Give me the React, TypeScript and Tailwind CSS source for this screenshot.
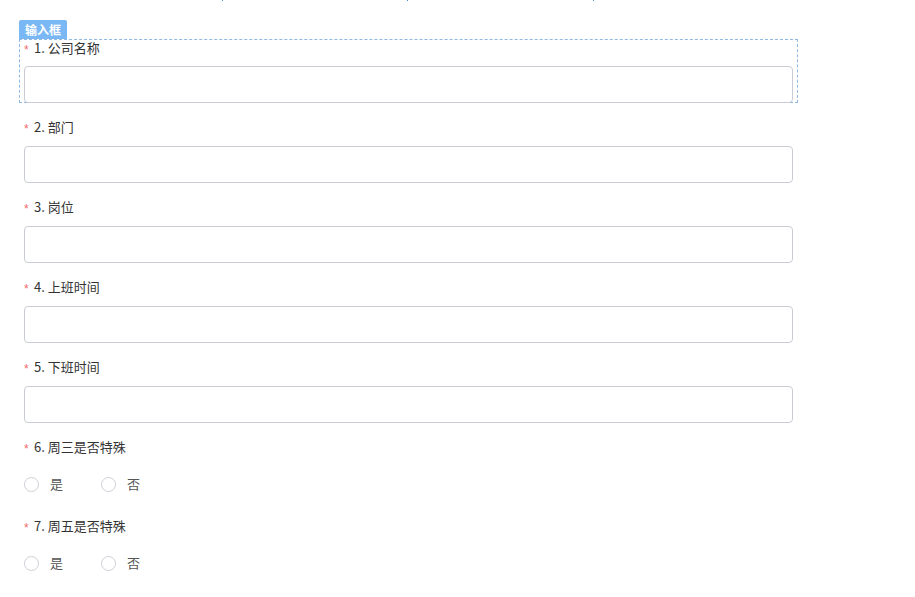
const font = { fontFamily: '"Noto Sans CJK SC", "Liberation Sans", sans-serif' };

const inputs = ["1. 公司名称", "2. 部门", "3. 岗位", "4. 上班时间", "5. 下班时间"];
const radios = ["6. 周三是否特殊", "7. 周五是否特殊"];

const Label = ({ text }: { text: string }) => (
  <div className="flex items-center h-[16px] text-[13px] leading-[16px] text-[#333]">
    <span className="w-[10px] text-[12px] leading-[12px] text-[#f56c6c] relative top-[2px]" style={{ fontFamily: '"Liberation Sans", sans-serif' }}>*</span>
    <span>{text}</span>
  </div>
);

const Radio = ({ text }: { text: string }) => (
  <label className="flex items-center gap-[11px] w-[77px] text-[13px] text-[#555]">
    <span className="w-[15px] h-[15px] rounded-full border border-[#cdd0d6] bg-white" />
    <span>{text}</span>
  </label>
);

export default function App() {
  return (
    <div className="w-[915px] h-[597px] bg-white overflow-hidden" style={font}>
      <div className="relative h-[20px]">
        <span className="absolute left-[222px] top-0 w-[1px] h-[1px] bg-[#3a8ee6]" />
        <span className="absolute left-[407px] top-0 w-[1px] h-[1px] bg-[#3a8ee6]" />
        <span className="absolute left-[593px] top-0 w-[1px] h-[1px] bg-[#3a8ee6]" />
      </div>

      <div className="ml-[19px]">
        <div className="w-[48px] h-[19px] rounded-t-[2px] bg-[#7ab8f5] text-white text-[12px] font-bold leading-[19px] text-center">
          输入框
        </div>
        <div className="w-[779px] h-[64px] border border-dashed border-[#8fb8e3] pl-[4px]">
          <Label text={inputs[0]} />
          <div className="mt-[10px] w-[769px] h-[37px] rounded-[4px] border border-[#c9ccd4]" />
        </div>
      </div>

      <div className="ml-[24px] flex flex-col">
        {inputs.slice(1).map((t) => (
          <div key={t} className="mt-[16px] flex flex-col">
            <Label text={t} />
            <div className="mt-[11px] w-[769px] h-[37px] rounded-[4px] border border-[#c9ccd4]" />
          </div>
        ))}
        {radios.map((t) => (
          <div key={t} className="mt-[16px] flex flex-col">
            <Label text={t} />
            <div className="mt-[21px] flex items-center h-[16px]">
              <Radio text="是" />
              <Radio text="否" />
            </div>
            <div className="h-[10px]" />
          </div>
        ))}
      </div>
    </div>
  );
}
